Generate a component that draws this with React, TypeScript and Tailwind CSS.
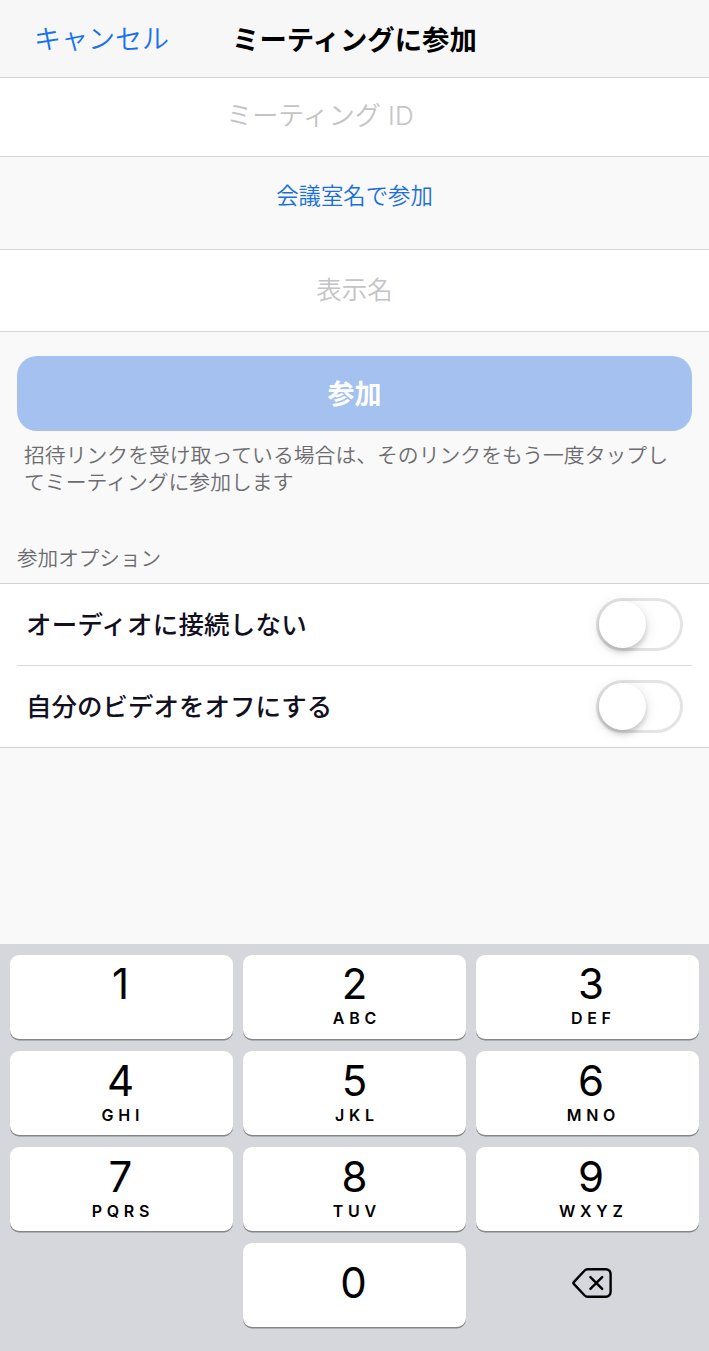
import { useState } from "react";

const KEYS = [
  { digit: "1", letters: "" },
  { digit: "2", letters: "ABC" },
  { digit: "3", letters: "DEF" },
  { digit: "4", letters: "GHI" },
  { digit: "5", letters: "JKL" },
  { digit: "6", letters: "MNO" },
  { digit: "7", letters: "PQRS" },
  { digit: "8", letters: "TUV" },
  { digit: "9", letters: "WXYZ" },
  { digit: "0" },
];

function Toggle({ label }: { label: string }) {
  const [on, setOn] = useState(false);

  return (
    <button
      type="button"
      role="switch"
      aria-checked={on}
      aria-label={label}
      onClick={() => setOn(!on)}
      className={`-mt-[1px] flex h-[53px] w-[87px] items-center rounded-full border-[3px] ${
        on ? "justify-end border-green-500 bg-green-500" : "border-[#e4e4e4] bg-white"
      }`}
    >
      <span className="h-[47px] w-[47px] rounded-full bg-white shadow-[0_4px_5px_rgba(0,0,0,0.16),0_2px_14px_rgba(0,0,0,0.12)]" />
    </button>
  );
}

function Key({ digit, letters }: { digit: string; letters?: string }) {
  return (
    <button
      type="button"
      className={`flex h-[84px] flex-col items-center rounded-[9px] bg-white text-black shadow-[0_1.5px_0_#85868a] ${
        letters === undefined
          ? "col-start-2 pt-[16px] pr-[2px]"
          : "pt-[6px] nth-[-n+3]:pt-[5px] nth-[3n]:pl-[7px] nth-[3n+1]:pr-[2px]"
      }`}
    >
      <span className="text-[42px] leading-[48px] font-normal">{digit}</span>
      {letters && (
        <span className="-mr-[4.7px] text-[16px] leading-[21px] font-semibold tracking-[4.7px]">
          {letters}
        </span>
      )}
    </button>
  );
}

function Keypad() {
  return (
    <div className="grid h-[407px] shrink-0 grid-cols-3 content-start gap-x-[10px] gap-y-3 bg-[#d5d7dd] px-[10px] pt-[11px] font-['Inter','Liberation_Sans',sans-serif]">
      {KEYS.map((key) => (
        <Key key={key.digit} digit={key.digit} letters={key.letters} />
      ))}
      <button
        type="button"
        aria-label="削除"
        className="col-start-3 flex h-[84px] items-center justify-center pb-[4px] pl-[9px] text-black"
      >
        <svg
          width="42"
          height="32"
          viewBox="0 0 42 32"
          fill="none"
          stroke="currentColor"
          strokeWidth="2.4"
          strokeLinecap="round"
          strokeLinejoin="round"
        >
          <path d="M16.5 2.3H35a4.6 4.6 0 0 1 4.6 4.6v18.2a4.6 4.6 0 0 1-4.6 4.6H16.5a4 4 0 0 1-2.8-1.2L3 17.2a1.7 1.7 0 0 1 0-2.4L13.7 3.5a4 4 0 0 1 2.8-1.2Z" />
          <path d="M19.4 10.1l11.8 11.8M31.2 10.1l-11.8 11.8" />
        </svg>
      </button>
    </div>
  );
}

export default function App() {
  return (
    <main className="flex h-[1351px] w-[709px] flex-col overflow-hidden bg-[#f9f9f9] font-['Inter','Noto_Sans_CJK_JP',sans-serif]">
      <header className="flex h-[78px] shrink-0 items-center border-b border-[#d2d3d4] bg-[#f7f7f7] pt-[4px] pl-[34px]">
        <button
          type="button"
          className="w-[198px] text-left text-[27px] font-[350] whitespace-nowrap text-[#1872f0]"
        >
          キャンセル
        </button>
        <h1 className="text-[27.4px] font-bold whitespace-nowrap text-black">
          ミーティングに参加
        </h1>
      </header>

      <div className="flex h-[79px] shrink-0 items-center border-b border-[#d5d5d6] bg-white pb-[4px]">
        <input
          placeholder="ミーティング ID"
          className="w-[640px] text-center text-[26px] font-[350] outline-none placeholder:text-[#c4c4c6]"
        />
      </div>

      <div className="flex h-[92px] shrink-0 justify-center pt-[22px]">
        <button
          type="button"
          className="h-[33px] text-[22.4px] leading-[33px] font-[350] text-[#1b6fdc]"
        >
          会議室名で参加
        </button>
      </div>

      <div className="flex h-[83px] shrink-0 items-center border-y border-[#d5d5d6] bg-white">
        <input
          placeholder="表示名"
          className="w-full text-center text-[25.5px] font-[350] outline-none placeholder:text-[#c4c4c6]"
        />
      </div>

      <section className="h-[251px] shrink-0 px-[17px] pt-6">
        <button
          type="button"
          className="h-[75px] w-full rounded-[20px] bg-[#a4c1f0] pt-[3px] text-[27px] font-bold text-white"
        >
          参加
        </button>
        <p className="mt-[12px] px-[7px] text-[20.84px] leading-[26.5px] font-[350] whitespace-nowrap text-[#6c6c70]">
          招待リンクを受け取っている場合は、そのリンクをもう一度タップし
          <br />
          てミーティングに参加します
        </p>
        <h2 className="mt-[48px] text-[20.6px] leading-[30px] font-[350] text-[#6c6c70]">
          参加オプション
        </h2>
      </section>

      <section className="shrink-0 border-y border-[#d2d2d3] bg-white px-[17px]">
        <div className="flex h-[82px] items-center justify-between border-b border-[#dadadb] px-[9px]">
          <span className="pt-[2px] text-[25.5px] font-medium tracking-[0.2px] text-[#12101f]">
            オーディオに接続しない
          </span>
          <Toggle label="オーディオに接続しない" />
        </div>
        <div className="flex h-[81px] items-center justify-between px-[9px]">
          <span className="pt-[2px] text-[25.5px] font-medium text-[#12101f]">
            自分のビデオをオフにする
          </span>
          <Toggle label="自分のビデオをオフにする" />
        </div>
      </section>

      <div className="flex-1" />
      <Keypad />
    </main>
  );
}
